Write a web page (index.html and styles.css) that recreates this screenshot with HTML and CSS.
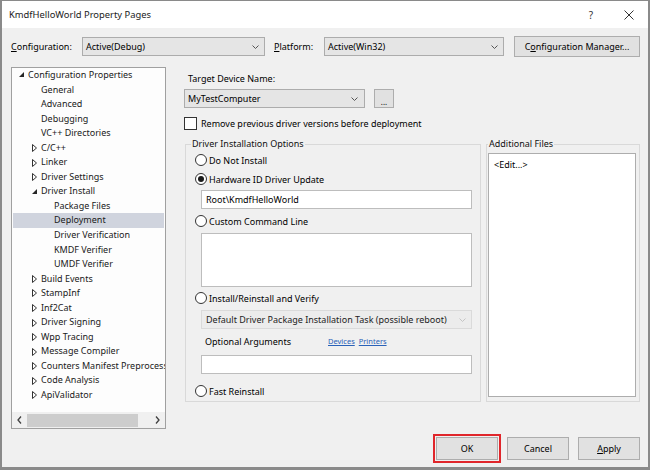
FILE: index.html
```html
<!DOCTYPE html>
<html lang="en">
<head>
<meta charset="utf-8">
<title>KmdfHelloWorld Property Pages</title>
<link rel="stylesheet" href="styles.css">
</head>
<body>
<div class="window">
  <div class="titlebar">
    <span class="title">KmdfHelloWorld Property Pages</span>
    <span class="help">?</span>
    <svg class="close" width="10" height="10" viewBox="0 0 10 10"><path d="M0.5 0.5 L9.5 9.5 M9.5 0.5 L0.5 9.5" stroke="#333" stroke-width="1" fill="none"/></svg>
  </div>
  <div class="client">
    <div class="config-row">
      <span class="lbl lbl-config"><u>C</u>onfiguration:</span>
      <div class="combo combo-config"><span class="combo-text">Active(Debug)</span><svg class="chev" width="7" height="4" viewBox="0 0 7 4"><polyline points="0.5,0.5 3.5,3.5 6.5,0.5" stroke="#555" fill="none"/></svg></div>
      <span class="lbl lbl-platform"><u>P</u>latform:</span>
      <div class="combo combo-platform"><span class="combo-text">Active(Win32)</span><svg class="chev" width="7" height="4" viewBox="0 0 7 4"><polyline points="0.5,0.5 3.5,3.5 6.5,0.5" stroke="#555" fill="none"/></svg></div>
      <button class="btn btn-cfgmgr">C<u>o</u>nfiguration Manager...</button>
    </div>

    <div class="main">
      <div class="tree">
        <div class="tree-list">
          <div class="row l0"><svg class="tw" width="9" height="6" viewBox="0 0 9 6"><polygon points="5,0 5,5 0,5" fill="#262626"/></svg>Configuration Properties</div>
          <div class="row l1"><span class="tw"></span>General</div>
          <div class="row l1"><span class="tw"></span>Advanced</div>
          <div class="row l1"><span class="tw"></span>Debugging</div>
          <div class="row l1"><span class="tw"></span>VC++ Directories</div>
          <div class="row l1"><svg class="tw" width="9" height="8" viewBox="0 0 9 8"><polygon points="0.5,0.5 4.5,4 0.5,7.5" fill="none" stroke="#333"/></svg>C/C++</div>
          <div class="row l1"><svg class="tw" width="9" height="8" viewBox="0 0 9 8"><polygon points="0.5,0.5 4.5,4 0.5,7.5" fill="none" stroke="#333"/></svg>Linker</div>
          <div class="row l1"><svg class="tw" width="9" height="8" viewBox="0 0 9 8"><polygon points="0.5,0.5 4.5,4 0.5,7.5" fill="none" stroke="#333"/></svg>Driver Settings</div>
          <div class="row l1"><svg class="tw" width="9" height="6" viewBox="0 0 9 6"><polygon points="5,0 5,5 0,5" fill="#262626"/></svg>Driver Install</div>
          <div class="row l2"><span class="tw"></span>Package Files</div>
          <div class="row l2 selected"><span class="tw"></span>Deployment</div>
          <div class="row l2"><span class="tw"></span>Driver Verification</div>
          <div class="row l2"><span class="tw"></span>KMDF Verifier</div>
          <div class="row l2"><span class="tw"></span>UMDF Verifier</div>
          <div class="row l1"><svg class="tw" width="9" height="8" viewBox="0 0 9 8"><polygon points="0.5,0.5 4.5,4 0.5,7.5" fill="none" stroke="#333"/></svg>Build Events</div>
          <div class="row l1"><svg class="tw" width="9" height="8" viewBox="0 0 9 8"><polygon points="0.5,0.5 4.5,4 0.5,7.5" fill="none" stroke="#333"/></svg>StampInf</div>
          <div class="row l1"><svg class="tw" width="9" height="8" viewBox="0 0 9 8"><polygon points="0.5,0.5 4.5,4 0.5,7.5" fill="none" stroke="#333"/></svg>Inf2Cat</div>
          <div class="row l1"><svg class="tw" width="9" height="8" viewBox="0 0 9 8"><polygon points="0.5,0.5 4.5,4 0.5,7.5" fill="none" stroke="#333"/></svg>Driver Signing</div>
          <div class="row l1"><svg class="tw" width="9" height="8" viewBox="0 0 9 8"><polygon points="0.5,0.5 4.5,4 0.5,7.5" fill="none" stroke="#333"/></svg>Wpp Tracing</div>
          <div class="row l1"><svg class="tw" width="9" height="8" viewBox="0 0 9 8"><polygon points="0.5,0.5 4.5,4 0.5,7.5" fill="none" stroke="#333"/></svg>Message Compiler</div>
          <div class="row l1"><svg class="tw" width="9" height="8" viewBox="0 0 9 8"><polygon points="0.5,0.5 4.5,4 0.5,7.5" fill="none" stroke="#333"/></svg>Counters Manifest Preprocessor</div>
          <div class="row l1"><svg class="tw" width="9" height="8" viewBox="0 0 9 8"><polygon points="0.5,0.5 4.5,4 0.5,7.5" fill="none" stroke="#333"/></svg>Code Analysis</div>
          <div class="row l1"><svg class="tw" width="9" height="8" viewBox="0 0 9 8"><polygon points="0.5,0.5 4.5,4 0.5,7.5" fill="none" stroke="#333"/></svg>ApiValidator</div>
        </div>
        <div class="hscroll">
          <div class="sb-btn"><svg width="5" height="8" viewBox="0 0 5 8"><polyline points="4,0.5 1,4 4,7.5" fill="none" stroke="#404040" stroke-width="1.3"/></svg></div>
          <div class="sb-thumb"></div>
          <div class="sb-track"></div>
          <div class="sb-btn"><svg width="5" height="8" viewBox="0 0 5 8"><polyline points="1,0.5 4,4 1,7.5" fill="none" stroke="#404040" stroke-width="1.3"/></svg></div>
        </div>
      </div>

      <div class="pane">
        <div class="field-label">Target Device Name:</div>
        <div class="device-row">
          <div class="combo combo-device"><span class="combo-text">MyTestComputer</span><svg class="chev" width="7" height="4" viewBox="0 0 7 4"><polyline points="0.5,0.5 3.5,3.5 6.5,0.5" stroke="#555" fill="none"/></svg></div>
          <button class="btn btn-browse">...</button>
        </div>
        <div class="check-row"><span class="checkbox"></span><span class="check-text">Remove previous driver versions before deployment</span></div>

        <div class="groups">
          <fieldset class="group group-install">
            <legend>Driver Installation Options</legend>
            <div class="radio-row r-first"><span class="radio"></span>Do Not Install</div>
            <div class="radio-row r-gap"><span class="radio checked"></span>Hardware ID Driver Update</div>
            <div class="textbox tb-hwid">Root\KmdfHelloWorld</div>
            <div class="radio-row r-custom"><span class="radio"></span>Custom Command Line</div>
            <div class="textbox textarea"></div>
            <div class="radio-row r-install"><span class="radio"></span>Install/Reinstall and Verify</div>
            <div class="combo combo-task"><span class="combo-text">Default Driver Package Installation Task (possible reboot)</span><svg class="chev" width="7" height="4" viewBox="0 0 7 4"><polyline points="0.5,0.5 3.5,3.5 6.5,0.5" stroke="#c4c4c4" fill="none"/></svg></div>
            <div class="args-row"><span class="args-label">Optional Arguments</span><a class="link link-devices" href="#">Devices</a><a class="link" href="#">Printers</a></div>
            <div class="textbox tb-args"></div>
            <div class="radio-row r-fast"><span class="radio"></span>Fast Reinstall</div>
          </fieldset>
          <fieldset class="group group-files">
            <legend>Additional Files</legend>
            <div class="listbox">&lt;Edit...&gt;</div>
          </fieldset>
        </div>
      </div>
    </div>

    <div class="footer">
      <button class="btn btn-foot btn-ok">OK</button>
      <button class="btn btn-foot">Cancel</button>
      <button class="btn btn-foot"><u>A</u>pply</button>
    </div>
  </div>
</div>
</body>
</html>
```

FILE: styles.css
```css
* { box-sizing: border-box; }
html, body { margin: 0; padding: 0; }
body {
  width: 650px;
  height: 470px;
  overflow: hidden;
  font-family: "Noto Sans", sans-serif;
  font-size: 9px;
  color: #000;
  background: #f0f0f0;
}
u { text-decoration: underline; text-underline-offset: 1px; }

.window {
  width: 650px;
  height: 470px;
  border: 2px solid #8a8a8a;
  border-top-width: 1px;
  border-bottom-width: 3px;
  background: #f0f0f0;
  display: flex;
  flex-direction: column;
}

.titlebar {
  height: 27px;
  flex: none;
  background: #fff;
  display: flex;
  align-items: center;
  padding-left: 7px;
}
.title { flex: 1; color: #222; font-size: 9.4px; }
.help { font-size: 10px; color: #333; margin-right: 31px; }
.close { margin-right: 14px; }

.client {
  flex: 1;
  padding: 8px 8px 0 9px;
  display: flex;
  flex-direction: column;
}

.config-row {
  height: 21px;
  display: flex;
  align-items: center;
}
.lbl { flex: none; white-space: nowrap; }
.lbl-config { width: 71px; }
.lbl-platform { width: 50px; margin-left: 9px; }

.combo {
  flex: none;
  height: 19px;
  display: flex;
  align-items: center;
  justify-content: space-between;
  padding: 0 5px 0 3px;
  background: #e5e5e5;
  border: 1px solid #acacac;
  white-space: nowrap;
}
.combo-config { width: 183px; }
.combo-platform { width: 180px; }
.combo-device { width: 181px; padding-left: 3px; padding-right: 6px; }

.btn {
  font-family: inherit;
  font-size: 9px;
  color: #000;
  background: #e1e1e1;
  border: 1px solid #adadad;
  padding: 0;
  margin: 0;
  flex: none;
}
.btn-cfgmgr { width: 126px; height: 21px; margin-left: 10px; }

.main {
  margin-top: 10px;
  height: 362px;
  display: flex;
}

.tree {
  width: 155px;
  height: 362px;
  flex: none;
  border: 1px solid #a0a0a0;
  background: #fdfdfd;
  display: grid;
  grid-template-rows: 344px 16px;
}
.tree-list {
  overflow: hidden;
  white-space: nowrap;
}
.row {
  height: 14.55px;
  line-height: 14.55px;
  display: flex;
  align-items: center;
  color: #1a1a1a;
}
.tw { width: 9px; flex: none; display: block; }
.l0 { padding-left: 7px; }
.l1 { padding-left: 20px; }
.l2 { padding-left: 33px; }
.selected { background: #d0d4de; margin: 0 1px; padding-left: 32px; }

.hscroll {
  height: 16px;
  display: flex;
  align-items: center;
  background: #f0f0f0;
}
.sb-btn { width: 15px; height: 15px; display: flex; align-items: center; justify-content: center; flex: none; }
.sb-thumb { width: 111px; height: 13px; background: #cdcdcd; flex: none; }
.sb-track { flex: 1; height: 13px; }

.pane {
  margin-left: 18px;
  width: 456px;
  display: flex;
  flex-direction: column;
}
.field-label { margin-top: 5px; line-height: 14px; padding-left: 4px; }
.device-row { margin-top: 3px; display: flex; height: 19px; }
.btn-browse { width: 20px; height: 19px; margin-left: 9px; line-height: 24px; font-size: 8px; }

.check-row { margin-top: 9px; height: 13px; display: flex; align-items: center; }
.checkbox { width: 13px; height: 13px; border: 1px solid #333; background: #fff; flex: none; }
.check-text { margin-left: 4px; }

.groups { margin-top: 7px; display: flex; }

.group {
  margin: 0;
  min-width: 0;
  border: 1px solid #d9d9d9;
  height: 265px;
}
.group legend {
  padding: 0 1px;
  line-height: 14px;
  color: #111;
}
.group-install {
  margin-left: 1px;
  width: 296px;
  padding: 2px 8px 0 9px;
}
.group-install legend { margin-left: -4px; }

.radio-row { height: 14px; display: flex; align-items: center; }
.radio {
  width: 12px;
  height: 12px;
  border: 1px solid #333;
  border-radius: 50%;
  background: #fff;
  margin-right: 2px;
  flex: none;
  display: flex;
  align-items: center;
  justify-content: center;
}
.radio.checked::after {
  content: "";
  width: 6px;
  height: 6px;
  border-radius: 50%;
  background: #1a1a1a;
}
.r-gap { margin-top: 5px; }
.r-custom { margin-top: 5px; }
.r-install { margin-top: 4px; }
.r-fast { margin-top: 10px; }

.textbox {
  margin-left: 6px;
  width: 271px;
  height: 19px;
  background: #fff;
  border: 1px solid #bdbdbd;
  padding: 0 4px;
  line-height: 17px;
  white-space: nowrap;
}
.tb-hwid { margin-top: 4px; }
.textarea { margin-top: 5px; height: 54px; }
.combo-task {
  margin-left: 6px;
  margin-top: 5px;
  width: 271px;
  background: #ececec;
  border-color: #dadada;
  padding: 0 5px 0 4px;
  color: #222;
}
.args-row { margin-top: 5px; height: 14px; display: flex; align-items: center; padding-left: 10px; }
.args-label { width: 123px; }
.link { font-size: 7.5px; color: #2a62b8; text-decoration: underline; }
.link-devices { margin-right: 4px; }
.tb-args { margin-top: 7px; }

.group-files {
  margin-left: 5px;
  width: 154px;
  padding: 2px 3px 0 1px;
}
.group-files legend { margin-left: 0; }
.listbox {
  height: 244px;
  background: #fff;
  border: 1px solid #adadad;
  padding: 4px 5px;
  line-height: 14px;
}

.footer {
  margin-top: 8px;
  display: flex;
  justify-content: flex-end;
  gap: 9px;
}
.btn-foot { width: 62px; height: 23px; }
.btn-ok { outline: 2px solid #e0262b; outline-offset: 1px; }
```
